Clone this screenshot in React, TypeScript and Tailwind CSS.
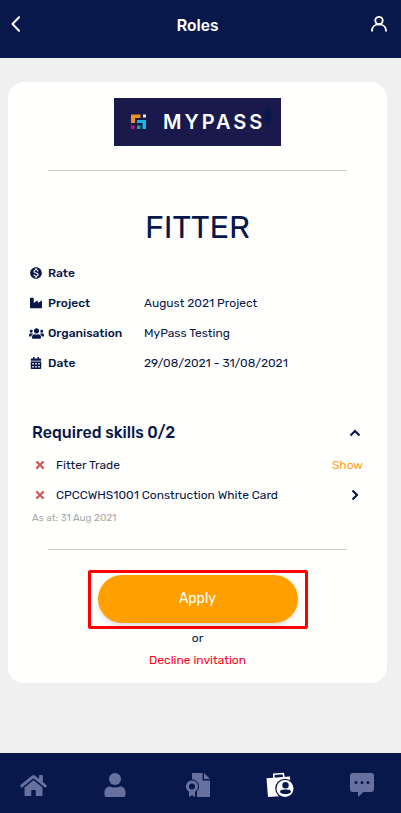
import React, { useState } from "react";
import type { ReactNode } from "react";
import { FaHome, FaIndustry, FaUsers, FaCalendarAlt, FaTimes } from "react-icons/fa";
import { MdMonetizationOn } from "react-icons/md";

function BackIcon() {
  return (
    <svg width="10" height="16" viewBox="0 0 10 16" fill="none" stroke="currentColor" strokeWidth="2" strokeLinecap="round" strokeLinejoin="round">
      <path d="M8 1.3 1.5 8 8 14.7" />
    </svg>
  );
}

function ProfileIcon() {
  return (
    <svg width="16" height="16" viewBox="0 0 16 16" fill="none" stroke="currentColor" strokeWidth="1.9" strokeLinecap="round">
      <circle cx="8" cy="4.6" r="3.7" />
      <path d="M1 14.8C1 11 4 8.4 8 8.4S15 11 15 14.8" />
    </svg>
  );
}

function Chevron({ direction }: { direction: "up" | "down" | "right" }) {
  const path = { up: "M1.5 8.5 6 4 10.5 8.5", down: "M1.5 4 6 8.5 10.5 4", right: "M3.5 1.5 8 6 3.5 10.5" }[direction];
  return (
    <svg width="12" height="12" viewBox="0 0 12 12" fill="none" stroke="currentColor" strokeWidth="2.2">
      <path d={path} />
    </svg>
  );
}

function LogoMark() {
  return (
    <svg width="16" height="16" viewBox="0 0 16 16">
      <path d="M0 0.5H9.5V4H4V9H0Z" fill="#e8941f" />
      <path d="M6 6H15V15H11.5V9H6Z" fill="#1bb3e6" />
      <rect x="12" y="0.5" width="3" height="3" fill="#e8e8f0" />
      <rect x="0" y="11.5" width="3.5" height="3.5" fill="#c4146a" />
      <rect x="6" y="11.5" width="3.5" height="3.5" fill="#12a89a" />
    </svg>
  );
}

function PersonIcon() {
  return (
    <svg width="22" height="24" viewBox="0 0 22 24" fill="currentColor">
      <circle cx="11" cy="6" r="6" />
      <path d="M6 13.5C7.5 14.3 9 14.6 11 14.6S14.5 14.3 16 13.5C19.5 13.5 21.5 16 21.5 19.5V22A2 2 0 0 1 19.5 24H2.5A2 2 0 0 1 .5 22V19.5C.5 16 2.5 13.5 6 13.5Z" />
    </svg>
  );
}

function CertificateIcon() {
  return (
    <svg width="24" height="24" viewBox="0 0 24 24" fill="currentColor">
      <path d="M6 0H16.5V7.5H24V24H11V18.5A7.3 7.3 0 0 0 6 6.3Z" />
      <path d="M18 0 24 6H18Z" />
      <path fillRule="evenodd" d="M6 7.5A6 6 0 0 1 9 18.7V24L6 22.2 3 24V18.7A6 6 0 0 1 6 7.5ZM6 10.5A3 3 0 1 0 6 16.5 3 3 0 0 0 6 10.5Z" />
    </svg>
  );
}

function RolesIcon() {
  return (
    <svg width="28" height="26" viewBox="0 0 28 26">
      <path d="M7.8 6V2.3L17.3 1.5 17.8 5" fill="none" stroke="currentColor" strokeWidth="1.6" />
      <path d="M0.5 6.3 24 4.6 25 23.5 2 25Z" fill="currentColor" />
      <circle cx="19" cy="16.5" r="9.8" fill="#08184a" />
      <circle cx="19" cy="16.5" r="8.5" fill="currentColor" />
      <circle cx="19.5" cy="13.2" r="3.2" fill="#08184a" />
      <path d="M14 20.3C14 18.2 15.5 17.6 19.5 17.6S25 18.2 25 20.3C22.5 22.8 16.5 22.8 14 20.3Z" fill="#08184a" />
    </svg>
  );
}

function MessageIcon() {
  return (
    <svg width="24" height="24" viewBox="0 0 24 24">
      <path d="M3 0H21A3 3 0 0 1 24 3V16A3 3 0 0 1 21 19H13.5L8 24V19H3A3 3 0 0 1 0 16V3A3 3 0 0 1 3 0Z" fill="currentColor" />
      <g fill="#08184a">
        <circle cx="6" cy="9.5" r="1.5" />
        <circle cx="12" cy="9.5" r="1.5" />
        <circle cx="18" cy="9.5" r="1.5" />
      </g>
    </svg>
  );
}

const details: { icon: ReactNode; label: string; value: string }[] = [
  { icon: <MdMonetizationOn size={14} />, label: "Rate", value: "" },
  { icon: <FaIndustry size={12} />, label: "Project", value: "August 2021 Project" },
  { icon: <FaUsers size={15} />, label: "Organisation", value: "MyPass Testing" },
  { icon: <FaCalendarAlt size={12} />, label: "Date", value: "29/08/2021 - 31/08/2021" },
];

const tabs: { label: string; icon: ReactNode }[] = [
  { label: "Home", icon: <FaHome size={27} /> },
  { label: "Profile", icon: <PersonIcon /> },
  { label: "Certificates", icon: <CertificateIcon /> },
  { label: "Roles", icon: <RolesIcon /> },
  { label: "Messages", icon: <MessageIcon /> },
];

export default function App() {
  const [open, setOpen] = useState(true);
  return (
    <div className="flex min-h-screen flex-col bg-[#f0f0f0] font-['Rubik','Roboto',sans-serif] text-xs leading-5 text-[#08184a]">
      <header className="flex h-[58px] items-start justify-between bg-[#08184a] pt-4 pr-3.5 pl-2 text-white">
        <button type="button" aria-label="Back" className="w-4 pl-[3px]"><BackIcon /></button>
        <h1 className="text-base leading-5 font-medium">Roles</h1>
        <button type="button" aria-label="Account"><ProfileIcon /></button>
      </header>

      <main className="flex-1 pt-6 pr-3.5 pb-6 pl-2">
        <article className="rounded-2xl bg-[#fffffd] px-6 pt-4 pb-[13px]">
          <div className="mx-auto flex h-12 w-[167px] items-center bg-[#191a4b] pl-[17px] text-white">
            <LogoMark />
            <span className="ml-4 font-['Inter',sans-serif] text-xl leading-6 font-semibold tracking-[3px]">MYPASS</span>
            <span className="mb-3 h-3.5 w-1.5 shrink-0 bg-[#08174f] blur-[1px]" />
          </div>
          <hr className="mx-4 mt-6 border-[#c8c8c8]" />

          <h2 className="mt-9 text-center text-[32px] leading-10">FITTER</h2>

          <dl className="mt-[11px]">
            {details.map((d) => (
              <div key={d.label} className="flex h-[30px] items-center">
                <dt className="flex w-28 items-center font-medium">
                  <span className="mr-1 -ml-1 flex w-4 justify-center">{d.icon}</span>
                  {d.label}
                </dt>
                <dd>{d.value}</dd>
              </div>
            ))}
          </dl>

          <section className="mt-[38px]">
            <h3>
              <button type="button" aria-expanded={open} onClick={() => setOpen(!open)} className="flex h-[34px] w-full items-center justify-between pr-0.5 text-base leading-5 font-medium">
                Required skills 0/2
                <Chevron direction={open ? "up" : "down"} />
              </button>
            </h3>
            {open && (
              <ul>
                <li className="flex h-[30px] items-center">
                  <span className="flex w-6 pl-0.5 text-[#cd5c5c]"><FaTimes size={12} /></span>
                  Fitter Trade
                  <button type="button" className="ml-auto text-[#ff9f1c]">Show</button>
                </li>
                <li className="flex h-[30px] items-center">
                  <span className="flex w-6 pl-0.5 text-[#cd5c5c]"><FaTimes size={12} /></span>
                  CPCCWHS1001 Construction White Card
                  <button type="button" aria-label="View skill" className="ml-auto pr-0.5"><Chevron direction="right" /></button>
                </li>
              </ul>
            )}
            <p className="text-[10px] leading-4 text-[#a9a9a9]">As at: 31 Aug 2021</p>
          </section>

          <hr className="mx-4 mt-[23px] border-[#c8c8c8]" />

          <div className="mt-5 flex flex-col items-center">
            <div className="rounded-xs border-3 border-[#ff0000] px-[7px] pt-0.5 pb-[3px]">
              <button type="button" className="h-12 w-[200px] rounded-full bg-[#ffa000] text-sm text-white shadow-md">Apply</button>
            </div>
            <p className="leading-[18px]">or</p>
            <button type="button" className="mt-[3px] text-[#ff0020]">Decline invitation</button>
          </div>
        </article>
      </main>

      <nav className="h-[60px] bg-[#08184a]">
        <ul className="flex h-full items-center justify-between pr-[25px] pl-[19px]">
          {tabs.map((t) => (
            <li key={t.label} className="flex w-7 justify-center pt-1">
              <a href="#" aria-label={t.label} className={t.label === "Roles" ? "text-white" : "text-[#66719f]"}>{t.icon}</a>
            </li>
          ))}
        </ul>
      </nav>
    </div>
  );
}
